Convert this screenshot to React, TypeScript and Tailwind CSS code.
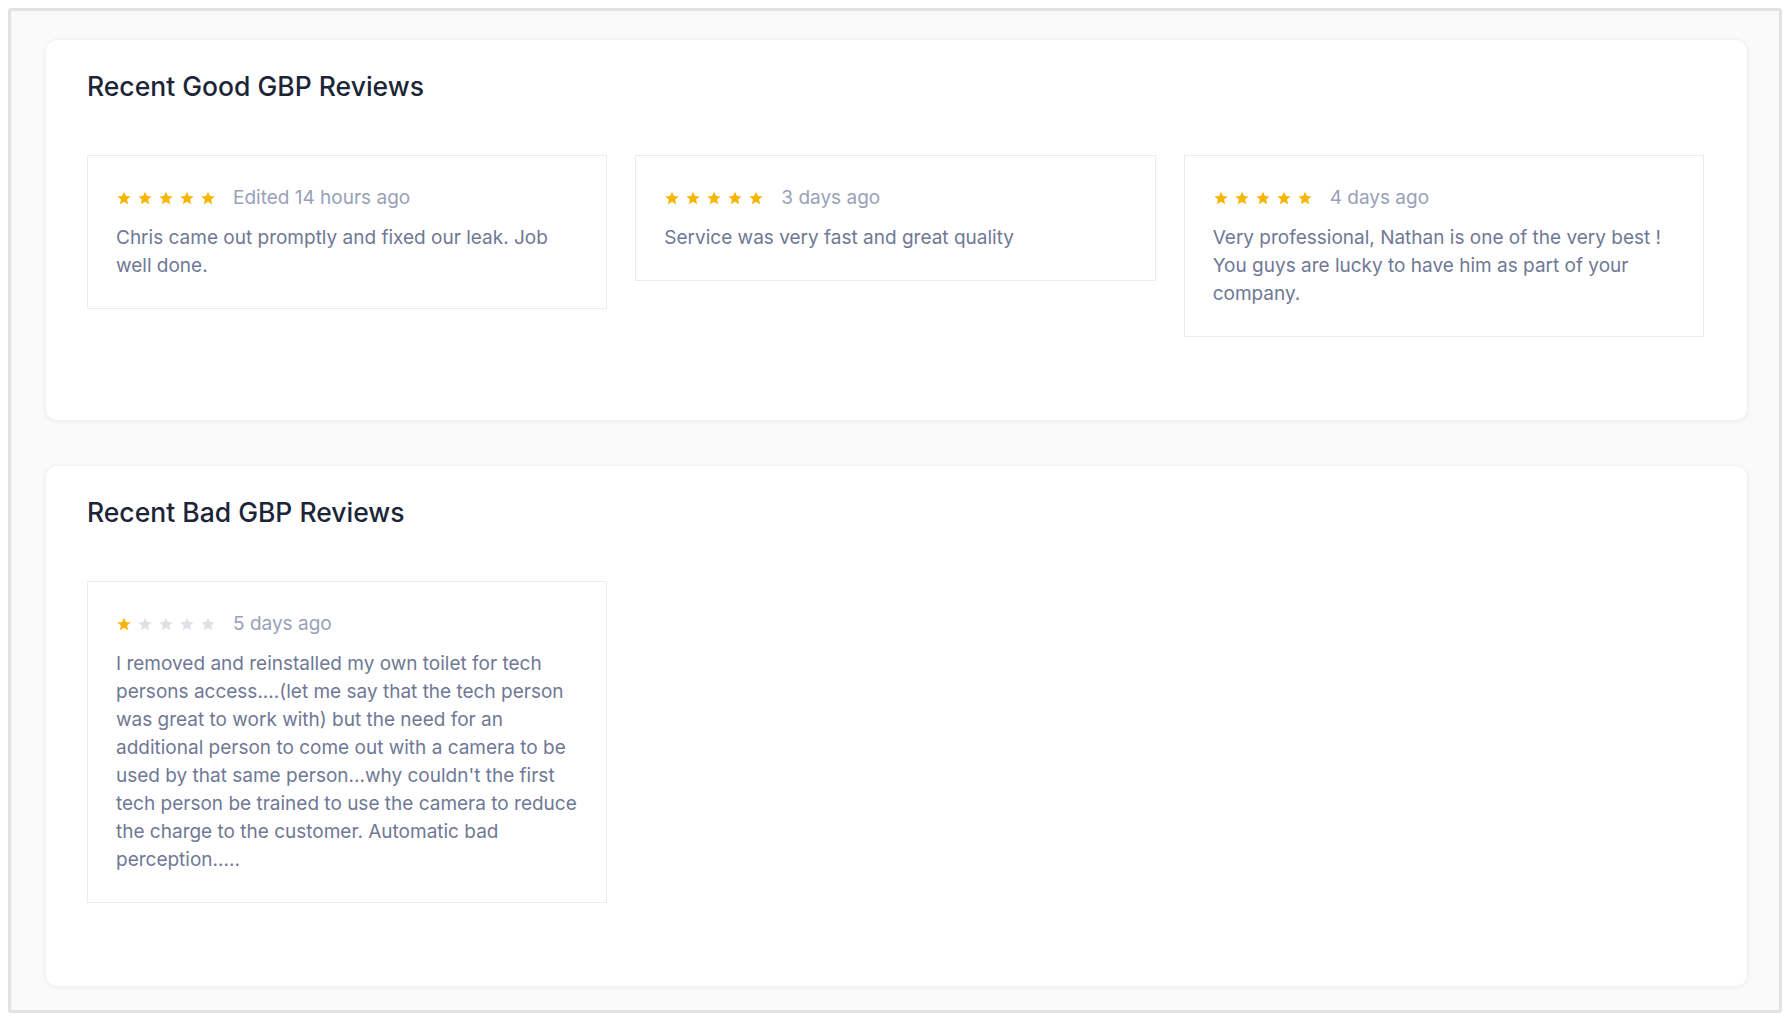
const goodReviews = [
  {
    rating: 5,
    when: "Edited 14 hours ago",
    text: "Chris came out promptly and fixed our leak. Job well done.",
  },
  {
    rating: 5,
    when: "3 days ago",
    text: "Service was very fast and great quality",
  },
  {
    rating: 5,
    when: "4 days ago",
    text: "Very professional, Nathan is one of the very best ! You guys are lucky to have him as part of your company.",
  },
];

const badReviews = [
  {
    rating: 1,
    when: "5 days ago",
    text: "I removed and reinstalled my own toilet for tech persons access....(let me say that the tech person was great to work with) but the need for an additional person to come out with a camera to be used by that same person...why couldn't the first tech person be trained to use the camera to reduce the charge to the customer. Automatic bad perception.....",
  },
];

type Review = { rating: number; when: string; text: string };

function Stars({ rating }: { rating: number }) {
  return (
    <div className="flex items-center gap-[5px]">
      {[1, 2, 3, 4, 5].map((i) => (
        <svg
          key={i}
          viewBox="0 0 24 24"
          className={`h-[16px] w-[16px] ${i <= rating ? "text-[#f7b500]" : "text-[#dde1ea]"}`}
          fill="currentColor"
        >
          <path d="M12 2.5l2.9 6.6 7.1.6-5.4 4.7 1.6 7-6.2-3.7-6.2 3.7 1.6-7L2 9.7l7.1-.6z" />
        </svg>
      ))}
    </div>
  );
}

function ReviewCard({ review }: { review: Review }) {
  return (
    <div className="border border-[#ececec] bg-white p-7">
      <div className="flex items-center gap-[17px] mb-3">
        <Stars rating={review.rating} />
        <span className="text-[19px] leading-7 text-[#98a1b7]">{review.when}</span>
      </div>
      <p className="text-[19px] leading-7 text-[#6f7895]">{review.text}</p>
    </div>
  );
}

function ReviewSection({ title, reviews }: { title: string; reviews: Review[] }) {
  return (
    <div className="bg-white rounded-xl border border-[#f1f1f1] shadow-[0_1px_4px_rgba(0,0,0,0.05)] pt-[30px] pl-[41px] pr-[43px] pb-[83px]">
      <h2 className="text-[26.5px] leading-8 font-medium text-[#1c2538] mb-[53px]">{title}</h2>
      <div className="grid grid-cols-3 gap-7 items-start">
        {reviews.map((r, i) => (
          <ReviewCard key={i} review={r} />
        ))}
      </div>
    </div>
  );
}

export default function App() {
  return (
    <div className="h-[1020px] w-[1790px] bg-white p-[8px] font-['Inter',sans-serif]">
      <div className="h-[1005px] border-[3px] border-[#e2e2e2] rounded-[3px] bg-[#fafafa] pt-[28px] pl-[34px] pr-[31px] flex flex-col gap-[44px]">
        <ReviewSection title="Recent Good GBP Reviews" reviews={goodReviews} />
        <ReviewSection title="Recent Bad GBP Reviews" reviews={badReviews} />
      </div>
    </div>
  );
}
